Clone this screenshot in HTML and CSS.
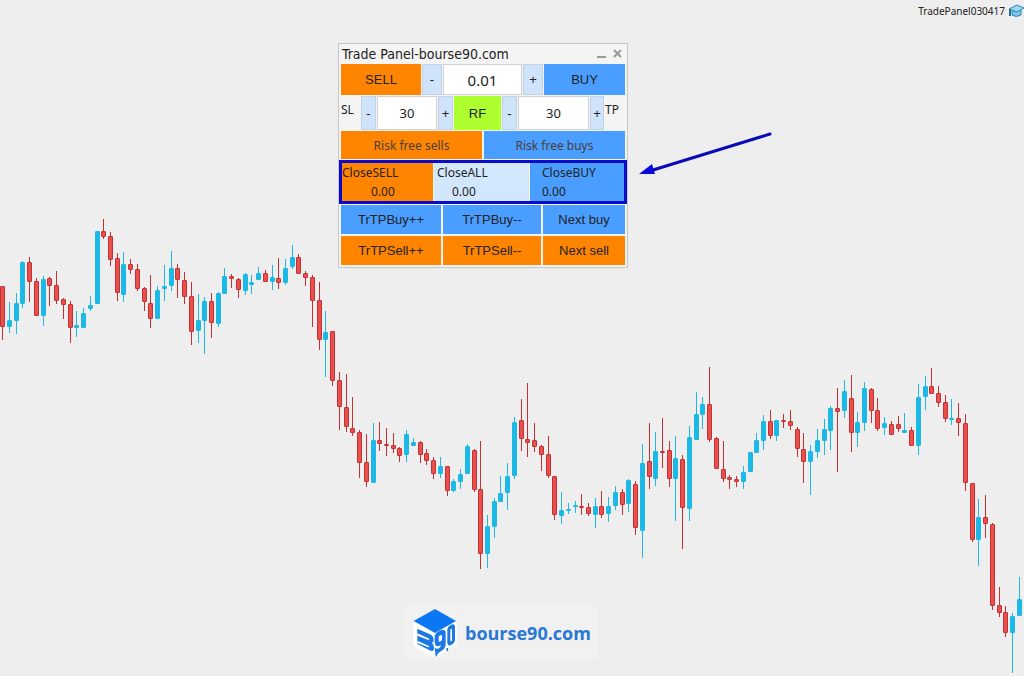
FILE: index.html
```html
<!DOCTYPE html>
<html lang="en">
  <head>
    <meta charset="utf-8">
    <title>Trade Panel-bourse90.com</title>
    <link rel="stylesheet" href="styles.css">
  </head>
  <body>
    <main class="chart">
      <svg class="candles" id="candles" viewBox="0 0 1024 676" role="img" aria-label="Price chart"></svg>

      <div class="expert">
        <span>TradePanel030417</span>
        <svg width="16" height="14" viewBox="0 0 16 14">
          <path d="M4 6v5q4 3 9 0V6" fill="#7cc4ea" stroke="#2b86b8"/>
          <path d="M1 5L9 1l7 3-7 4z" fill="#9bd6f3" stroke="#2b86b8"/>
          <path d="M2 5v7" stroke="#2b6f98" stroke-width="2"/>
        </svg>
      </div>

      <section class="panel">
        <header class="title">
          <h1>Trade Panel-bourse90.com</h1>
          <button type="button" class="win" aria-label="Minimize">
            <svg width="10" height="10" viewBox="0 0 10 10"><path d="M0 8h9" stroke="#999" stroke-width="2"/></svg>
          </button>
          <button type="button" class="win" aria-label="Close">
            <svg width="10" height="10" viewBox="0 0 10 10"><path d="M1 1l7 7M8 1L1 8" stroke="#999" stroke-width="2"/></svg>
          </button>
        </header>

        <div class="row lots">
          <button type="button" class="sell">SELL</button>
          <button type="button" class="step">-</button>
          <input type="text" class="lot" value="0.01" aria-label="Lot">
          <button type="button" class="step">+</button>
          <button type="button" class="buy">BUY</button>
        </div>

        <div class="row stops">
          <label for="sl">SL</label>
          <button type="button" class="step">-</button>
          <input type="text" id="sl" value="30">
          <button type="button" class="step">+</button>
          <button type="button" class="rf">RF</button>
          <button type="button" class="step">-</button>
          <input type="text" id="tp" value="30">
          <button type="button" class="step">+</button>
          <label for="tp">TP</label>
        </div>

        <div class="row riskfree">
          <button type="button" class="sell">Risk free sells</button>
          <button type="button" class="buy">Risk free buys</button>
        </div>

        <div class="row closing">
          <button type="button" class="sell"><span>CloseSELL</span><span class="profit">0.00</span></button>
          <button type="button" class="all"><span>CloseALL</span><span class="profit">0.00</span></button>
          <button type="button" class="buy"><span>CloseBUY</span><span class="profit">0.00</span></button>
        </div>

        <div class="row trail">
          <button type="button" class="buy">TrTPBuy++</button>
          <button type="button" class="buy">TrTPBuy--</button>
          <button type="button" class="buy">Next buy</button>
          <button type="button" class="sell">TrTPSell++</button>
          <button type="button" class="sell">TrTPSell--</button>
          <button type="button" class="sell">Next sell</button>
        </div>
      </section>

      <svg class="arrow" width="134" height="46" viewBox="0 0 134 46">
        <path d="M131 3L14 39" stroke="#0a0ab8" stroke-width="3" stroke-linecap="round"/>
        <path d="M0 43L13 33l3 10z" fill="#0a0adc"/>
      </svg>

      <footer class="brand">
        <svg width="48" height="54" viewBox="0 0 144 162">
          <path d="M10 50L74 10l66 37v68l-63 42-67-37z" fill="#fff"/>
          <path d="M11 45L75 9l63 36-63 36z" fill="#0b77f2"/>
          <path d="M22 68l38 17q11 6 11 17 0 7-5 9 6 6 6 14 0 14-13 8l-37-19z" fill="#1b79e6"/>
          <path d="M22 82l33 15q5 4 0 5l-33-13zM22 104l33 15q5 4 0 5l-33-13z" fill="#fff"/>
          <path d="M74 93q0-12 15-19 18-8 18 8v32q0 13-13 21l-9 6-8 13-3-30q4 6 11 4 7-3 8-10-19 8-19-10zM86 94v10q0 5 6 2 4-2 4-7V90q0-5-5-2-5 2-5 6z" fill="#1b79e6" fill-rule="evenodd"/>
          <path d="M112 73q0-10 10-16 13-6 13 7v36q0 11-11 17-12 5-12-8zM121 74v30q0 4 3 2 2-2 2-5V70q0-3-3-1-2 1-2 5z" fill="#1b79e6" fill-rule="evenodd"/>
          <path d="M112 126v9" stroke="#1b79e6" stroke-width="5"/>
        </svg>
        <a href="#">bourse90.com</a>
      </footer>
    </main>

    <script src="chart.js"></script>
  </body>
</html>
```

FILE: styles.css
```css
body {
  margin: 0;
  background: #eeeeee;
  font-family: "Noto Sans", sans-serif;
  color: #222;
}
.chart {
  position: relative;
  min-height: 100vh;
  overflow: hidden;
}
.candles {
  display: block;
  width: 100%;
}
.candles .up {
  fill: #1cb9e6;
  stroke: #1cb9e6;
}
.candles .down {
  fill: #e8504c;
  stroke: #c62f33;
}
.candles .wick {
  stroke-width: 1;
}
.expert {
  position: absolute;
  top: 4px;
  right: 0;
  display: flex;
  align-items: center;
  gap: 3px;
  font-size: 10px;
  line-height: 14px;
}
.expert svg {
  fill: none;
}

/* floating trade window */
.panel {
  position: absolute;
  top: 43px;
  left: 338px;
  box-sizing: border-box;
  width: 290px;
  padding: 0 2px 1px;
  border: 1px solid #c8c8c8;
  background: #f4f4f4;
}
.title {
  display: flex;
  align-items: center;
  gap: 6px;
  height: 20px;
  padding-right: 2px;
}
.title h1 {
  flex: 1;
  margin: 0 0 0 1px;
  font-family: "DejaVu Sans Condensed", "Noto Sans", sans-serif;
  font-size: 14px;
  font-weight: normal;
  line-height: 20px;
  white-space: nowrap;
}
button,
input {
  box-sizing: border-box;
  min-width: 0;
  width: 100%;
  margin: 0;
  padding: 0;
  border: 0;
  border-radius: 0;
  font: 13px "Liberation Sans", sans-serif;
  color: #222;
}
.title .win {
  display: flex;
  width: 10px;
  background: none;
}
.row {
  display: grid;
  gap: 1px;
  margin-bottom: 1px;
}
.lots {
  grid-template-columns: 80px 20px 1fr 20px 81px;
  height: 31px;
}
.stops {
  grid-template-columns: 19px 15px 60px 15px 47px 15px 1fr 14px 20px;
  height: 34px;
}
.riskfree {
  grid-template-columns: 1fr 1fr;
  gap: 2px;
  height: 28px;
}
.riskfree button {
  font-family: "Noto Sans", sans-serif;
  font-size: 12px;
  color: #4a4038;
}
.trail {
  grid-template-columns: 100px 1fr 82px;
  grid-auto-rows: 29px;
  gap: 2px;
}
.sell {
  background: #ff8400;
}
.buy {
  background: #4a9eff;
}
.step {
  background: #cfe4fb;
  border: 1px solid #c3d3e3;
}
.rf {
  background: #adff2f;
}
input {
  border: 1px solid #d2d2d2;
  background: #fff;
  font-family: "Noto Sans", sans-serif;
  text-align: center;
}
.lot {
  font-size: 15px;
}
label {
  padding-top: 5px;
  font-size: 12px;
  line-height: 18px;
}
.closing {
  grid-template-columns: 91px 1fr 94px;
  height: 38px;
  margin: 0 -2px 1px;
  border: 3px solid #0a0ac8;
}
.closing button {
  display: flex;
  flex-direction: column;
  font: 12px/19px "Noto Sans", sans-serif;
  text-align: left;
}
.closing .profit {
  padding-left: 29px;
}
.closing .all {
  padding-left: 3px;
  background: #d2e6fc;
}
.closing .all .profit {
  padding-left: 15px;
}
.closing .buy {
  padding-left: 12px;
}
.closing .buy .profit {
  padding-left: 0;
}

.arrow {
  position: absolute;
  top: 131px;
  left: 639px;
}
.brand {
  position: absolute;
  bottom: 16px;
  left: 405px;
  display: flex;
  align-items: center;
  gap: 7px;
  padding: 0 7px 0 5px;
  background: #f1f1f1;
}
.brand a {
  font-family: "Open Sans", sans-serif;
  font-size: 18px;
  font-weight: bold;
  color: #2878d4;
  text-decoration: none;
}
```

FILE: chart.js
```javascript
// each candle: direction, high, body top, body bottom, low
var candles = [
  "d 286 286 327 340", "u 302 320 327 333", "u 293 303 321 334", "u 261 262 304 308",
  "d 257 262 282 302", "d 278 281 316 316", "u 276 279 316 326", "d 277 278 286 306",
  "d 271 285 301 304", "d 298 299 305 319", "d 301 304 328 343", "u 311 325 328 337",
  "u 308 313 328 328", "u 296 305 309 311", "u 231 231 304 304", "d 219 231 237 239",
  "d 232 236 260 266", "d 253 258 293 301", "u 252 264 295 302", "d 259 264 270 274",
  "d 264 269 289 291", "d 287 288 302 311", "d 275 303 319 328", "u 286 290 319 319",
  "u 265 286 289 301", "u 251 268 286 291", "d 264 268 280 298", "d 272 280 297 304",
  "d 282 296 332 345", "u 294 320 331 343", "u 297 301 321 354", "d 293 301 323 338",
  "u 292 293 324 327", "u 268 276 294 294", "d 274 276 279 288", "d 278 279 290 298",
  "u 273 274 291 295", "u 275 282 285 294", "u 267 273 280 280", "d 270 273 282 282",
  "u 265 277 282 290", "d 258 278 283 289", "u 259 268 283 285", "u 245 257 267 269",
  "d 254 257 274 274", "d 271 273 278 286", "d 275 277 301 327", "d 282 300 340 350",
  "u 311 332 340 377", "d 331 331 381 386", "d 372 380 407 430", "d 374 407 427 432",
  "d 397 428 433 436", "d 430 432 463 478", "d 434 462 482 487", "u 423 440 483 483",
  "d 422 440 444 451", "d 428 444 445 456", "d 433 445 449 453", "d 447 448 456 462",
  "u 430 434 455 462", "u 438 442 446 446", "d 441 442 455 463", "d 449 453 461 465",
  "d 457 460 474 479", "u 457 466 474 478", "d 466 466 491 496", "u 479 481 491 492",
  "u 469 474 482 489", "u 444 446 474 474", "d 449 450 490 492", "d 441 489 554 569",
  "u 515 526 554 568", "u 498 501 527 538", "u 476 493 502 502", "u 463 476 493 510",
  "u 417 422 476 479", "d 399 420 439 451", "d 383 439 443 457", "d 423 440 447 452",
  "d 445 446 455 471", "d 436 454 476 478", "d 476 476 515 520", "u 492 510 516 524",
  "u 503 509 510 514", "u 501 505 507 513", "d 494 506 507 515", "d 503 507 514 516",
  "u 498 506 515 528", "d 491 506 515 518", "u 497 506 514 522", "u 486 492 506 510",
  "d 489 492 505 515", "u 479 480 504 512", "d 481 484 528 535", "u 444 463 531 558",
  "d 423 461 477 489", "u 432 451 479 486", "d 418 451 453 468", "d 441 450 479 487",
  "u 436 458 479 521", "d 455 459 508 549", "u 426 437 509 521", "u 392 414 440 440",
  "u 397 404 415 429", "d 367 404 440 442", "d 437 438 469 469", "d 441 469 479 482",
  "d 475 477 480 489", "d 476 479 482 487", "u 466 472 482 489", "u 452 452 472 472",
  "u 433 440 453 453", "u 415 421 441 450", "d 410 421 436 439", "u 420 420 436 441",
  "d 414 420 422 428", "d 410 421 426 430", "d 427 429 449 457", "d 433 449 462 483",
  "u 445 451 462 495", "u 429 440 452 458", "u 419 429 441 455", "u 406 408 431 450",
  "d 388 408 412 472", "u 380 391 411 418", "d 375 398 433 452", "u 412 422 433 447",
  "u 382 388 423 431", "d 388 389 411 423", "d 398 410 429 431", "u 417 423 428 435",
  "d 421 424 435 435", "d 416 424 429 432", "u 413 430 433 433", "d 427 430 446 446",
  "u 384 397 446 455", "u 376 386 397 410", "d 368 386 394 394", "d 386 393 403 407",
  "d 395 402 419 422", "u 399 418 419 425", "d 403 418 423 436", "d 414 423 483 491",
  "d 483 483 540 542", "u 499 517 540 566", "d 495 517 524 538", "d 523 524 606 610",
  "d 587 605 613 617", "d 606 612 633 637", "u 613 616 633 673", "u 577 599 616 616"
];

var svg = document.getElementById("candles");
var step = 1016.5 / (candles.length - 1);

function add(name, attrs) {
  var el = document.createElementNS("http://www.w3.org/2000/svg", name);
  for (var key in attrs) {
    el.setAttribute(key, attrs[key]);
  }
  svg.appendChild(el);
}

candles.forEach(function (candle, i) {
  var c = candle.split(" ");
  var dir = c[0] == "u" ? "up" : "down";
  var x = Math.floor(2.8 + i * step) + 0.5;
  add("line", { class: "wick " + dir, x1: x, x2: x, y1: c[1], y2: c[4] });
  add("rect", { class: dir, x: x - 2, y: +c[2] + 0.5, width: 4, height: Math.max(c[3] - c[2] - 1, 1), rx: 0.5 });
});
```
